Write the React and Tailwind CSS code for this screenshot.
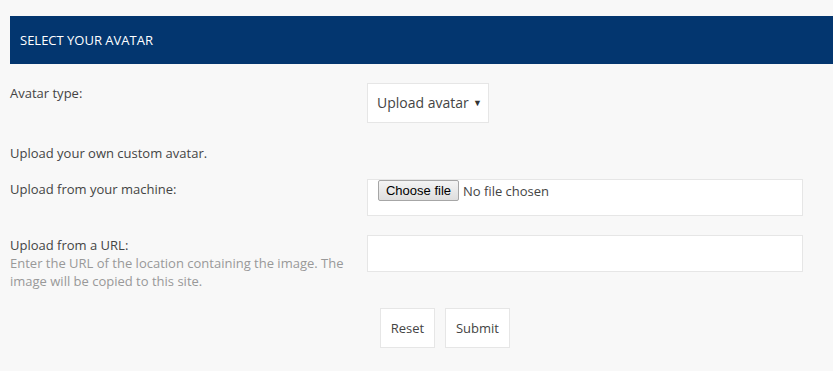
export default function App() {
    return (
        <div className="min-h-[371px] bg-[#f8f8f8] pl-[10px] pt-[16px] text-[13px] leading-[18px] text-[#444] font-['Open_Sans',sans-serif]">
            {/* Header */}
            <div className="flex h-[48px] items-center bg-[#03366f] px-[10px]">
                <h2 className="text-[13px] font-normal uppercase text-white">Select your avatar</h2>
            </div>

            <form className="pr-[30px]">
                {/* Avatar type */}
                <div className="mt-[19px] flex">
                    <label className="w-[357px] shrink-0 pt-[1px]">Avatar type:</label>
                    <div className="flex h-[40px] w-[122px] items-center justify-between border border-[#e6e6e6] bg-white pl-[9px] pr-[6px] text-[14px]">
                        <span>Upload avatar</span>
                        <span className="text-[9px] text-[#333]">▼</span>
                    </div>
                </div>

                <p className="mt-[21px]">Upload your own custom avatar.</p>

                {/* From machine */}
                <div className="mt-[17px] flex">
                    <label className="w-[357px] shrink-0 pt-[1px]">Upload from your machine:</label>
                    <div className="h-[37px] flex-1 border border-[#e6e6e6] bg-white">
                        <div className="flex items-center pl-[10px] text-[13px]">
                            <span className="flex h-[21px] w-[81px] items-center justify-center rounded-[2px] border border-[#a6a6a6] bg-gradient-to-b from-[#f4f4f4] to-[#dedede] font-['Liberation_Sans',Arial,sans-serif] text-black">
                                Choose file
                            </span>
                            <span className="ml-[4px] text-[#444]">No file chosen</span>
                        </div>
                    </div>
                </div>

                {/* From URL */}
                <div className="mt-[19px] flex">
                    <div className="w-[357px] shrink-0 pr-[10px] pt-[1px]">
                        <label>Upload from a URL:</label>
                        <p className="text-[#999]">Enter the URL of the location containing the image. The image will be copied to this site.</p>
                    </div>
                    <input type="text" className="h-[37px] flex-1 border border-[#e6e6e6] bg-white outline-none" />
                </div>

                {/* Actions */}
                <div className="mt-[18px] flex gap-[10px] pl-[370px]">
                    <button type="button" className="h-[40px] w-[55px] border border-[#e6e6e6] bg-white text-[#444]">Reset</button>
                    <button type="button" className="h-[40px] w-[65px] border border-[#e6e6e6] bg-white text-[#444]">Submit</button>
                </div>
            </form>
        </div>
    );
}
